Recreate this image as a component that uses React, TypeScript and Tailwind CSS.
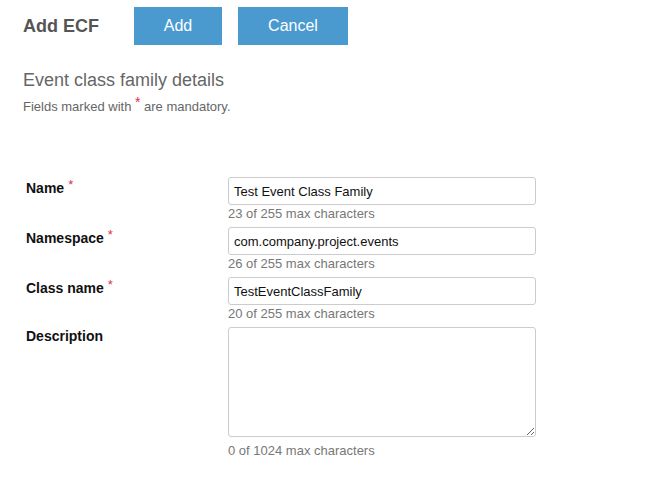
import React from "react";

const font = { fontFamily: '"Liberation Sans", Arial, sans-serif' };

function Row({ label, required, value, counter }: { label: string; required?: boolean; value: string; counter: string }) {
  return (
    <div className="flex">
      <div className="w-[202px] pt-[3px] text-[14px] leading-[16px] font-bold text-[#111]">
        {label}
        {required && <span className="ml-[4px] relative top-[-4px] text-[13px] leading-[0] font-normal text-[#d9304f]">*</span>}
      </div>
      <div className="w-[308px]">
        <input
          defaultValue={value}
          className="block w-[308px] h-[28px] border border-[#cccccc] rounded-[3px] px-[5px] text-[13px] text-[#111] outline-none bg-white"
          style={font}
        />
        <div className="h-[22px] pt-[1px] text-[13px] leading-[16px] text-[#777]">{counter}</div>
      </div>
    </div>
  );
}

export default function App() {
  return (
    <div className="w-[664px] h-[486px] bg-white" style={font}>
      <div className="flex items-center pt-[7px] pl-[23px]">
        <div className="w-[111px] text-[18px] font-bold text-[#555]">Add ECF</div>
        <button className="w-[88px] h-[38px] bg-[#4a9acf] text-white text-[16px]">Add</button>
        <button className="ml-[16px] w-[110px] h-[38px] bg-[#4a9acf] text-white text-[16px]">Cancel</button>
      </div>
      <div className="pl-[23px] pt-[25px] text-[18px] leading-[20px] text-[#666]">Event class family details</div>
      <div className="pl-[23px] pt-[9px] h-[25px] text-[13px] leading-[16px] text-[#666]">
        Fields marked with <span className="relative top-[-4px] text-[14px] leading-[0] text-[#d9304f]">*</span> are mandatory.
      </div>
      <div className="pl-[26px] pt-[62px] flex flex-col">
        <Row label="Name" required value="Test Event Class Family" counter="23 of 255 max characters" />
        <Row label="Namespace" required value="com.company.project.events" counter="26 of 255 max characters" />
        <Row label="Class name" required value="TestEventClassFamily" counter="20 of 255 max characters" />
        <div className="flex">
          <div className="w-[202px] pt-[1px] text-[14px] leading-[16px] font-bold text-[#111]">Description</div>
          <div className="w-[308px]">
            <textarea
              className="block w-[308px] h-[110px] border border-[#cccccc] rounded-[3px] px-[5px] text-[13px] outline-none bg-white"
              style={font}
            />
            <div className="pt-[6px] text-[13px] leading-[16px] text-[#777]">0 of 1024 max characters</div>
          </div>
        </div>
      </div>
    </div>
  );
}
